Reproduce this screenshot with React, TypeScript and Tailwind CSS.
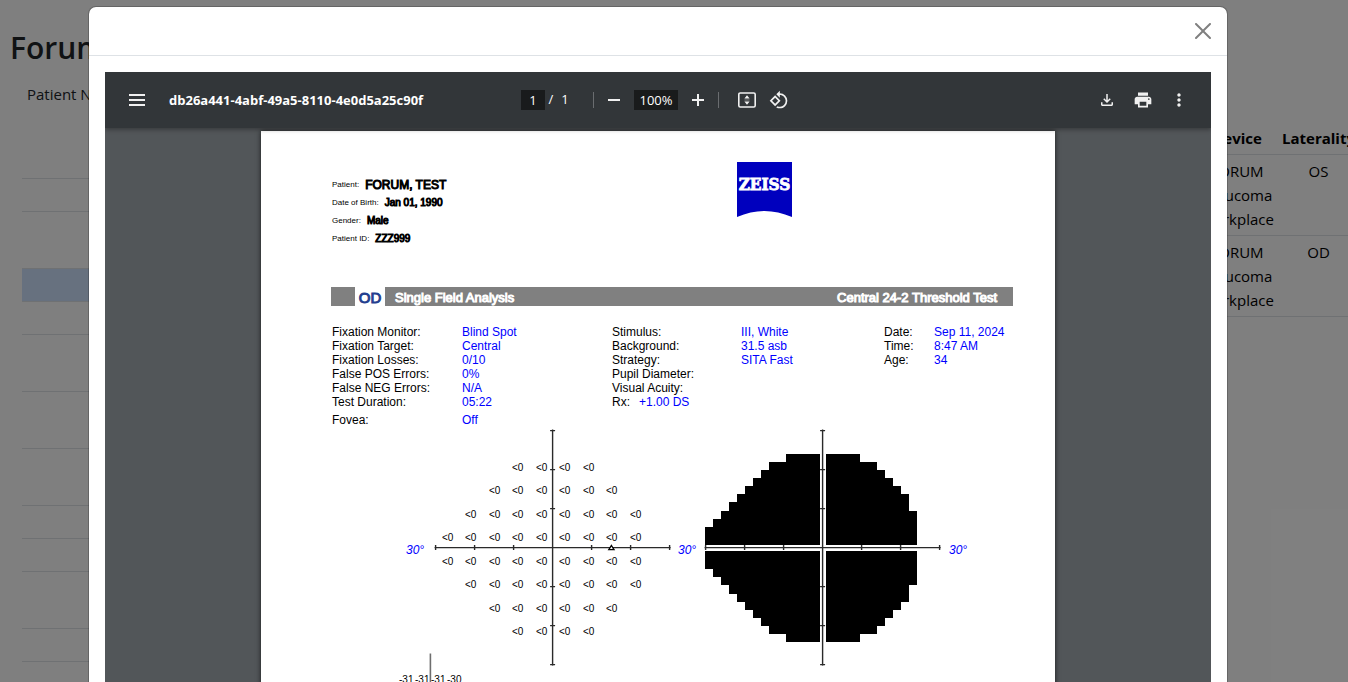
import React from "react";
import {
  MdMoreVert,
  MdOutlineFileDownload,
  MdPrint,
  MdRotate90DegreesCcw,
} from "react-icons/md";

const leftRows = [
  "h-[33px]",
  "h-[33px]",
  "h-[57px]",
  "h-[33px] bg-[#cfe2ff]",
  "h-[33px]",
  "h-[57px]",
  "h-[57px]",
  "h-[57px]",
  "h-[33px]",
  "h-[33px]",
  "h-[57px]",
  "h-[33px]",
  "h-[33px]",
];

const rightRows = ["OS", "OD"];

const fixation = [
  ["Fixation Monitor:", "Blind Spot"],
  ["Fixation Target:", "Central"],
  ["Fixation Losses:", "0/10"],
  ["False POS Errors:", "0%"],
  ["False NEG Errors:", "N/A"],
  ["Test Duration:", "05:22"],
];

const stimulus = [
  ["Stimulus:", "III, White"],
  ["Background:", "31.5 asb"],
  ["Strategy:", "SITA Fast"],
  ["Pupil Diameter:", ""],
  ["Visual Acuity:", ""],
];

const exam = [
  ["Date:", "Sep 11, 2024"],
  ["Time:", "8:47 AM"],
  ["Age:", "34"],
];

const patient = [
  ["Patient:", "FORUM, TEST", "text-[12px]"],
  ["Date of Birth:", "Jan 01, 1990", "text-[10px]"],
  ["Gender:", "Male", "text-[10px]"],
  ["Patient ID:", "ZZZ999", "text-[10px]"],
];

const columns = [442, 465, 489, 512, 536, 559, 583, 606, 630];
const thresholdRows = [
  { y: 471, from: 3, to: 6 },
  { y: 494, from: 2, to: 7 },
  { y: 518, from: 1, to: 8 },
  { y: 541, from: 0, to: 8 },
  { y: 565, from: 0, to: 8 },
  { y: 588, from: 1, to: 8 },
  { y: 612, from: 2, to: 7 },
  { y: 635, from: 3, to: 6 },
];
const tickOffsets = [-117, -78, -39, 39, 78, 117];

function Axes({ cx, cy }: { cx: number; cy: number }) {
  return (
    <g stroke="#2a2a2a" strokeWidth="1.4">
      <path d={`M${cx - 118} ${cy}H${cx + 118}M${cx} ${cy - 118}V${cy + 118}`} />
      {tickOffsets.map((t) => (
        <path
          key={t}
          d={`M${cx + t} ${cy - 2.5}v5M${cx - 2.5} ${cy + t}h5`}
        />
      ))}
    </g>
  );
}

function FieldCharts() {
  return (
    <svg
      viewBox="331 427 682 300"
      className="block h-[300px] w-[682px] font-['Liberation_Sans',Arial,sans-serif]"
      role="img"
      aria-label="Threshold values and grayscale"
    >
      <Axes cx={552.6} cy={547.6} />
      <g fontSize="10" fill="#000">
        {thresholdRows.map((row) =>
          columns.slice(row.from, row.to + 1).map((x) => (
            <text key={`${row.y}-${x}`} x={x} y={row.y}>
              {"<0"}
            </text>
          ))
        )}
      </g>
      <path d="M608.8 549.6L611.4 545.4L614 549.6Z" fill="#fff" stroke="#000" strokeWidth="1.3" />
      <g fontSize="12" fontStyle="italic" fill="#0000ff">
        <text x="406" y="554">30°</text>
        <text x="678" y="554">30°</text>
        <text x="949" y="554">30°</text>
      </g>
      <g fill="#000">
        <path d="M820 454H786V462H769V470H761V478H753V486H745V494H737V502H729V511H721V519H713V527H705V545H820Z" />
        <path d="M826 454H860V462H877V470H885V478H893V486H901V494H909V511H917V545H826Z" />
        <path d="M820 551H705V569H713V577H721V585H729V594H737V602H745V610H753V618H761V626H769V634H786V642H820Z" />
        <path d="M826 551H917V585H909V602H901V610H893V618H885V626H877V634H860V642H826Z" />
      </g>
      <Axes cx={822.6} cy={547.6} />
      <path d="M430.4 653.5V727" stroke="#6e6e6e" strokeWidth="1.6" />
      <g fontSize="10" fill="#000">
        <text x="399" y="683">-31</text>
        <text x="415" y="683">-31</text>
        <text x="431" y="683">-31</text>
        <text x="447" y="683">-30</text>
      </g>
    </svg>
  );
}

function ZeissLogo() {
  return (
    <svg viewBox="0 0 55 55" className="h-[55px] w-[55px]" role="img" aria-label="ZEISS">
      <path d="M0 0H55V55Q41 49 27.500 49T0 55Z" fill="#0000be" />
      <text
        x="27.500"
        y="28"
        textAnchor="middle"
        fill="#fff"
        stroke="#fff"
        strokeWidth="0.800"
        fontWeight="700"
        fontSize="17"
        className="font-['DejaVu_Serif_Condensed','DejaVu_Serif',serif]"
      >
        ZEISS
      </text>
    </svg>
  );
}

function IconButton({ label, children }: { label: string; children: React.ReactNode }) {
  return (
    <button
      type="button"
      aria-label={label}
      className="flex size-8 shrink-0 items-center justify-center text-[#f1f1f1]"
    >
      {children}
    </button>
  );
}

function Toolbar() {
  return (
    <div className="relative z-10 grid h-14 grid-cols-[1fr_auto_1fr] items-center bg-[#323639] px-4 text-[13px] text-white shadow-[0_2px_4px_rgba(0,0,0,0.3)]">
      <div className="flex items-center gap-4">
        <IconButton label="Menu">
          <svg viewBox="0 0 16 12" className="h-3 w-4" fill="currentColor">
            <path d="M0 0h16v2H0zM0 5h16v2H0zM0 10h16v2H0z" />
          </svg>
        </IconButton>
        <span className="whitespace-nowrap pt-[2px] font-bold">db26a441-4abf-49a5-8110-4e0d5a25c90f</span>
      </div>
      <div className="flex items-center">
        <input
          aria-label="Page number"
          defaultValue="1"
          className="h-5 w-6 bg-[#191b1c] text-center outline-none"
        />
        <span className="w-3 text-center">/</span>
        <span className="w-4 text-center">1</span>
        <span className="ml-5 mr-1 h-4 w-px bg-[#6a6d70]" />
        <IconButton label="Zoom out">
          <svg viewBox="0 0 12 12" className="size-3" fill="currentColor">
            <path d="M0 5h12v2H0z" />
          </svg>
        </IconButton>
        <input
          aria-label="Zoom level"
          defaultValue="100%"
          className="mx-1 h-5 w-11 bg-[#191b1c] text-center outline-none"
        />
        <IconButton label="Zoom in">
          <svg viewBox="0 0 12 12" className="size-3" fill="currentColor">
            <path d="M5 0h2v5h5v2H7v5H5V7H0V5h5z" />
          </svg>
        </IconButton>
        <span className="ml-1 mr-3 h-4 w-px bg-[#6a6d70]" />
        <IconButton label="Fit to page">
          <svg viewBox="0 0 18 16" className="h-4 w-[18px]">
            <rect x="0.8" y="1" width="16.4" height="14" rx="1.4" fill="none" stroke="currentColor" strokeWidth="1.600" />
            <path d="M9 3.300L11.600 6.500H6.400ZM9 12.700L11.600 9.500H6.400Z" fill="currentColor" />
            <path d="M6.400 8h5.200" stroke="currentColor" strokeWidth="0.400" />
          </svg>
        </IconButton>
        <IconButton label="Rotate counterclockwise">
          <MdRotate90DegreesCcw size={20} />
        </IconButton>
      </div>
      <div className="flex items-center justify-end gap-1">
        <IconButton label="Download">
          <MdOutlineFileDownload size={18} />
        </IconButton>
        <IconButton label="Print">
          <MdPrint size={20} />
        </IconButton>
        <IconButton label="More actions">
          <MdMoreVert size={20} />
        </IconButton>
      </div>
    </div>
  );
}

function Params({ rows, grid }: { rows: string[][]; grid: string }) {
  return (
    <dl className={`grid ${grid}`}>
      {rows.map(([k, v]) => (
        <React.Fragment key={k}>
          <dt>{k}</dt>
          <dd className="text-[#0000ff]">{v}</dd>
        </React.Fragment>
      ))}
    </dl>
  );
}

function Report() {
  return (
    <article className="mx-auto mt-[3px] min-h-[1123px] w-[794px] bg-white pl-[70px] pr-[42px] pt-[31px] font-['Liberation_Sans',Arial,sans-serif] text-[12px] leading-[14px] text-black shadow-[0_0_5px_rgba(0,0,0,0.7)]">
      <header className="flex">
        <div className="w-[406px] pl-px pt-[14px]">
          {patient.map(([k, v, size]) => (
            <p key={k} className="flex h-[18px] items-center gap-[6px]">
              <span className="text-[8px]">{k}</span>
              <span className={`${size} [-webkit-text-stroke:1px_#000]`}>{v}</span>
            </p>
          ))}
        </div>
        <ZeissLogo />
      </header>

      <div className="mt-[39px] flex h-[19px] items-stretch">
        <span className="w-6 bg-[#808080]" />
        <h2 className="flex w-[30px] items-center justify-center pt-[3px] text-[15px] text-[#243f8f] [-webkit-text-stroke:1px_#243f8f]">
          OD
        </h2>
        <div className="flex flex-1 items-center justify-between bg-[#808080] pl-[10px] pr-4 pt-[3px] text-[13px] text-white [-webkit-text-stroke:1px_#fff]">
          <span>Single Field Analysis</span>
          <span>Central 24-2 Threshold Test</span>
        </div>
      </div>

      <div className="mt-[19px] flex items-start pl-px">
        <div className="w-[280px]">
          <Params rows={fixation} grid="grid-cols-[130px_1fr] auto-rows-[14px]" />
          <div className="mt-1">
            <Params rows={[["Fovea:", "Off"]]} grid="grid-cols-[130px_1fr] auto-rows-[14px]" />
          </div>
        </div>
        <div className="w-[272px]">
          <Params rows={stimulus} grid="grid-cols-[129px_1fr] auto-rows-[14px]" />
          <Params rows={[["Rx:", "+1.00 DS"]]} grid="grid-cols-[27px_1fr] auto-rows-[14px]" />
        </div>
        <div className="flex-1 whitespace-nowrap">
          <Params rows={exam} grid="grid-cols-[50px_1fr] auto-rows-[14px]" />
        </div>
      </div>

      <FieldCharts />
    </article>
  );
}

function Background() {
  return (
    <main className="h-full overflow-hidden bg-white text-[15px] leading-6 text-black">
      <h1 className="px-[10px] pt-[29px] text-[30px] font-semibold leading-[38px] text-[#212529]">Forum</h1>
      <p className="mt-[15px] px-[27px] text-[#212529]">Patient Name</p>
      <div className="flex items-start pl-[22px] pt-[15px]">
        <table className="mt-6 flex-1 border-collapse [display:table]" aria-label="Exams">
          <tbody>
            {leftRows.map((cls, i) => (
              <tr key={i} className={`${cls} border-b border-[#dee2e6]`}>
                <td />
              </tr>
            ))}
          </tbody>
        </table>
        <table className="-mr-[11px] border-collapse text-center" aria-label="Documents">
          <thead>
            <tr className="border-b border-[#dee2e6]">
              <th className="w-[82px] px-1 pb-1 pt-[5px] font-bold">Device</th>
              <th className="w-[79px] px-1 pb-1 pt-[5px] font-bold">Laterality</th>
            </tr>
          </thead>
          <tbody className="align-top">
            {rightRows.map((side) => (
              <tr key={side} className="border-b border-[#dee2e6]">
                <td className="p-1">
                  FORUM
                  <br />
                  Glaucoma
                  <br />
                  Workplace
                </td>
                <td className="p-1">{side}</td>
              </tr>
            ))}
          </tbody>
        </table>
      </div>
    </main>
  );
}

export default function App() {
  return (
    <div className="relative h-screen overflow-hidden font-['Open_Sans','Noto_Sans',sans-serif]">
      <Background />
      <div className="absolute inset-0 flex items-start justify-center overflow-hidden bg-black/50 pr-8 pt-[6px]">
        <div
          role="dialog"
          aria-modal="true"
          aria-label="Document viewer"
          className="w-full max-w-[1140px] rounded-lg border border-black/20 bg-white bg-clip-padding"
        >
          <div className="flex justify-end border-b border-[#dee2e6] p-4">
            <button type="button" aria-label="Close" className="text-[#808080]">
              <svg viewBox="0 0 16 16" className="size-4" fill="currentColor">
                <path d="M.293.293a1 1 0 0 1 1.414 0L8 6.586 14.293.293a1 1 0 1 1 1.414 1.414L9.414 8l6.293 6.293a1 1 0 0 1-1.414 1.414L8 9.414l-6.293 6.293a1 1 0 0 1-1.414-1.414L6.586 8 .293 1.707a1 1 0 0 1 0-1.414z" />
              </svg>
            </button>
          </div>
          <div className="p-4">
            <div className="overflow-hidden bg-[#525659]">
              <Toolbar />
              <Report />
            </div>
          </div>
        </div>
      </div>
    </div>
  );
}
